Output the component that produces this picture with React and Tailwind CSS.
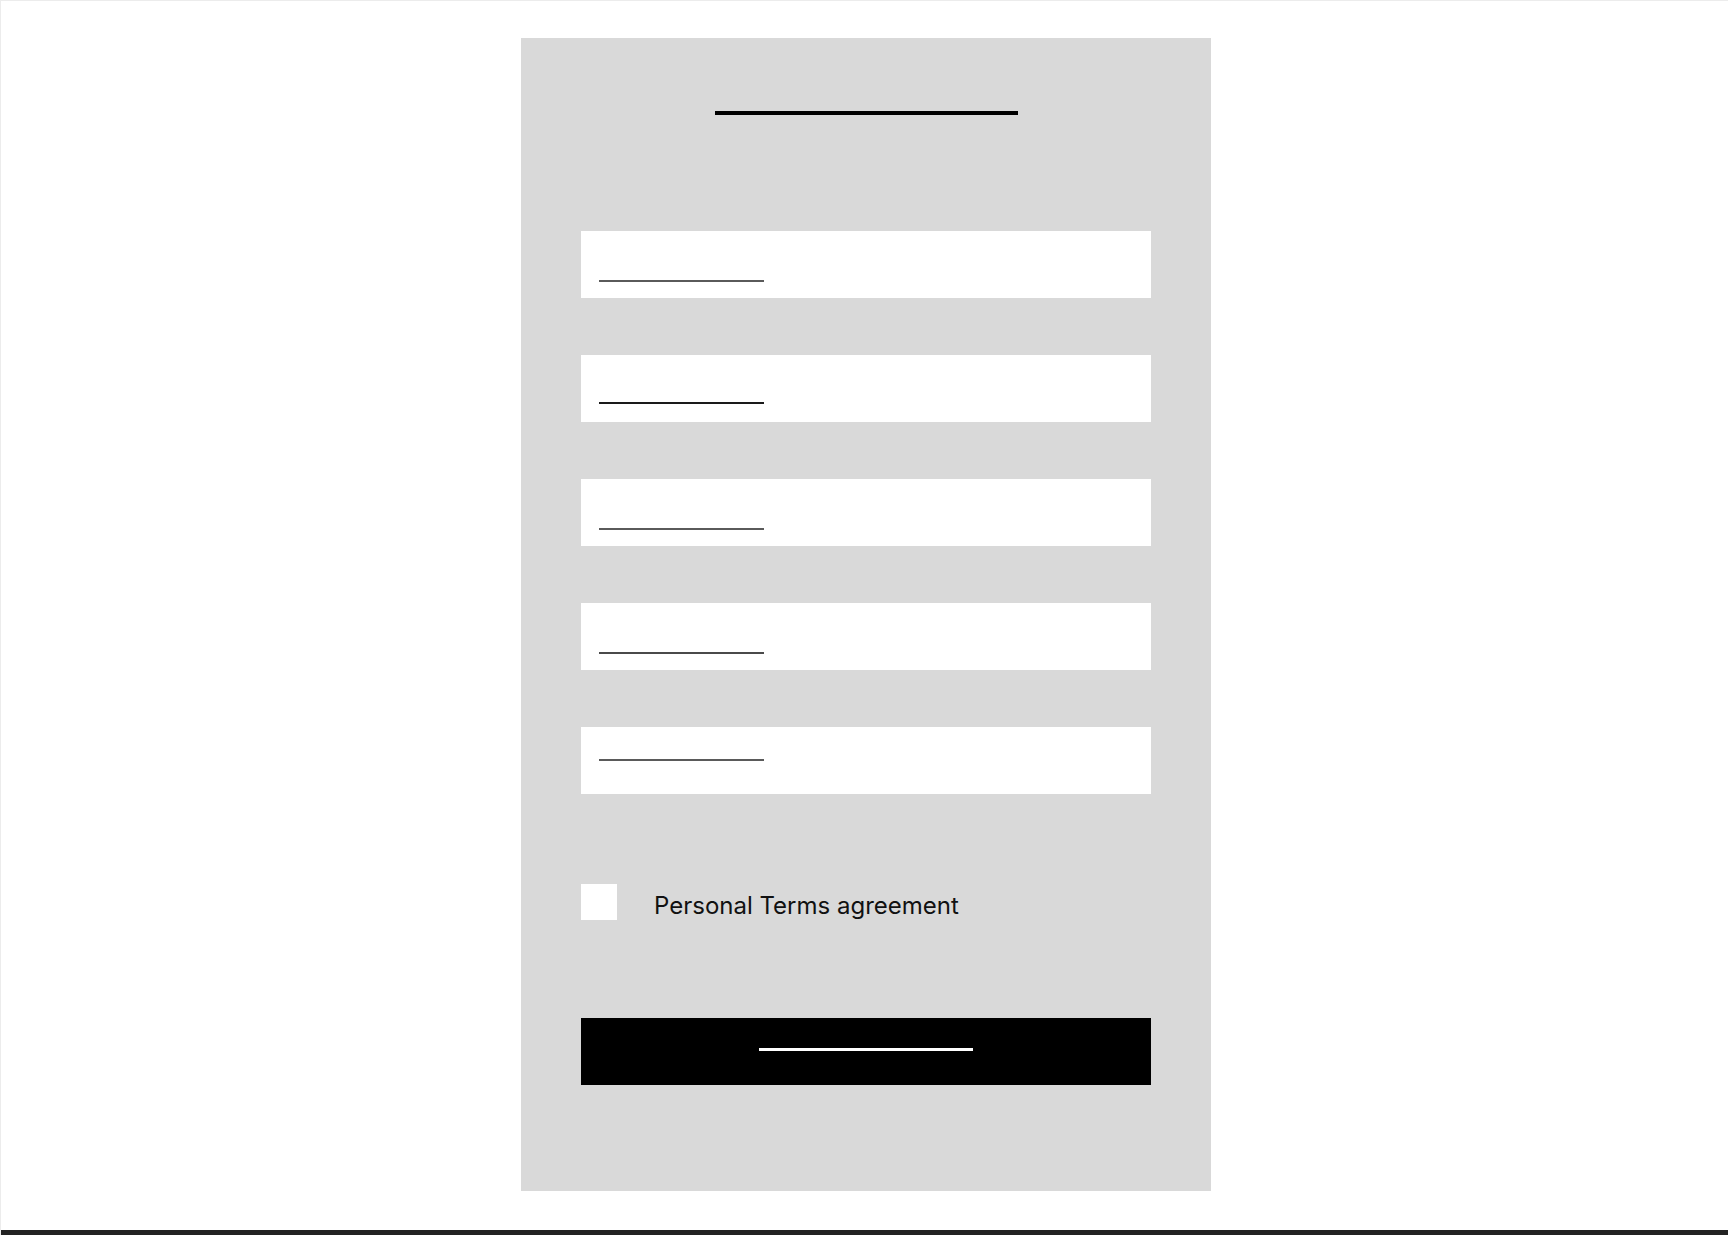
const fields = [
  { pad: "pt-[49px]", line: "bg-[#5a5a5a]" },
  { pad: "pt-[47px]", line: "bg-[#1a1a1a]" },
  { pad: "pt-[49px]", line: "bg-[#5a5a5a]" },
  { pad: "pt-[49px]", line: "bg-[#4a4a4a]" },
  { pad: "pt-[32px]", line: "bg-[#5a5a5a]" },
];

const App = () => {
  return (
    <div className="w-full h-[1235px] flex flex-col bg-white border-t border-l border-[#ececec] font-['Inter','Noto_Sans',sans-serif]">
      <div className="flex-1">
        <div className="ml-[520px] mt-[37px] w-[690px] h-[1153px] bg-[#d9d9d9] px-[60px] flex flex-col">
          {/* title */}
          <div className="mt-[73px] mx-auto w-[303px] h-[4px] bg-black" />

          {/* fields */}
          <div className="mt-[116px] flex flex-col gap-[57px]">
            {fields.map((f, i) => (
              <div key={i} className={`h-[67px] bg-white ${f.pad}`}>
                <div className={`ml-[18px] w-[165px] h-[2px] ${f.line}`} />
              </div>
            ))}
          </div>

          {/* agreement */}
          <label className="mt-[90px] flex items-center gap-[37px]">
            <span className="w-[36px] h-[36px] bg-white shrink-0" />
            <span className="text-[24px] leading-none text-[#111] pt-[8px]">
              Personal Terms agreement
            </span>
          </label>

          {/* submit */}
          <button className="mt-[98px] h-[67px] w-full bg-black pt-[30px] flex justify-center items-start">
            <span className="block w-[214px] h-[3px] bg-white" />
          </button>
        </div>
      </div>
      <div className="h-[5px] bg-[#222]" />
    </div>
  );
};

export default App;
